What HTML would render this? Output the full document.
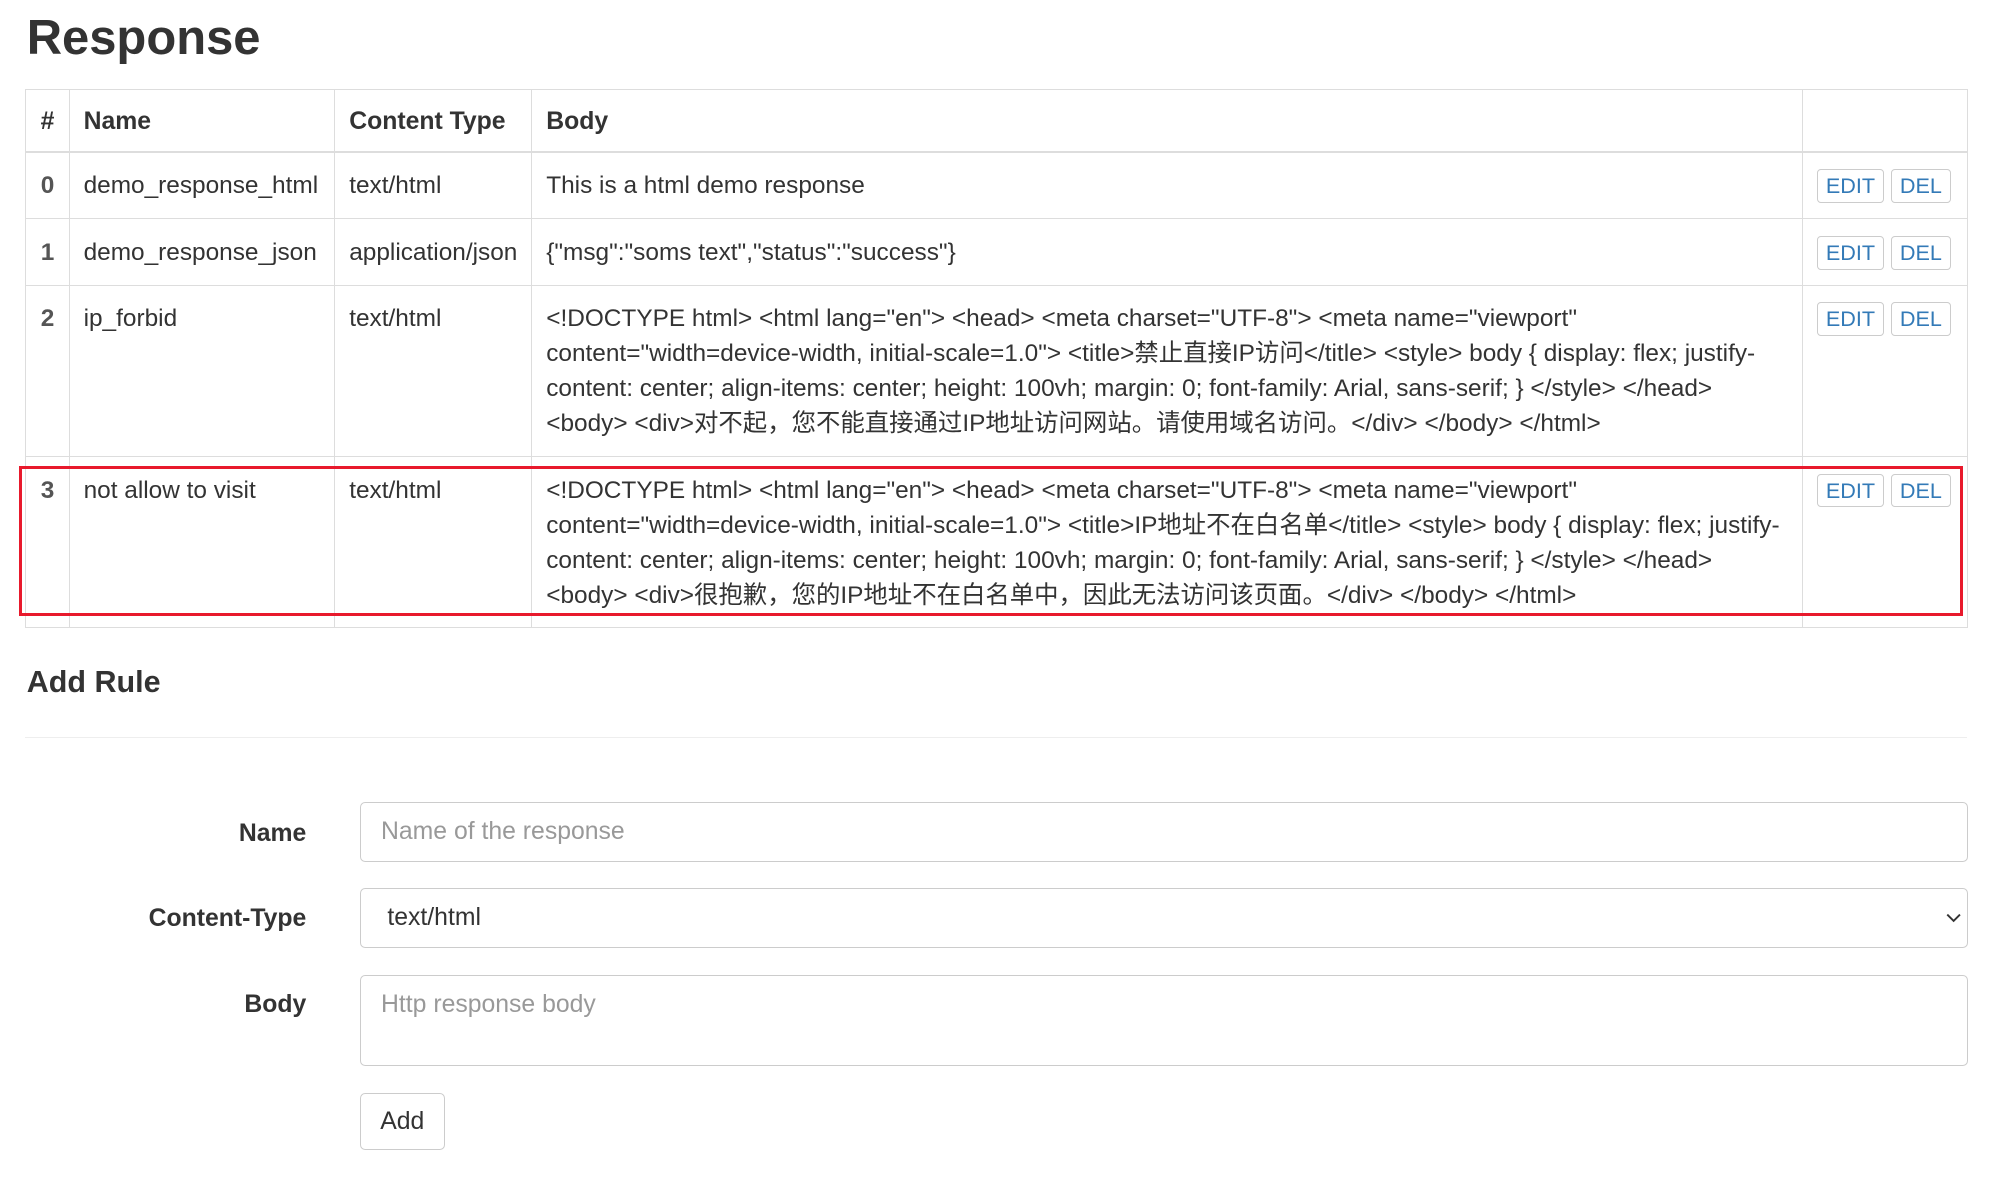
<!DOCTYPE html>
<html><head><meta charset="utf-8"><style>
html,body{margin:0;padding:0;background:#fff;}
body{zoom:1.271;width:1568px;height:926px;overflow:hidden;font-family:"Liberation Sans","Noto Sans CJK SC",sans-serif;color:#333;font-size:19.2px;position:relative;}
h1{position:absolute;left:21px;top:6px;margin:0;font-size:38.5px;font-weight:bold;line-height:48px;}
table{position:absolute;left:20px;top:70px;width:1528px;border-collapse:collapse;table-layout:fixed;}
td,th{border:1px solid #ddd;vertical-align:top;padding:13px 11px 11px 11px;line-height:27.5px;text-align:left;white-space:nowrap;}
th{font-weight:bold;font-size:19.5px;padding:12px 11px 8px 11px;height:28px;border-bottom:2px solid #ddd;}
td.n{font-weight:bold;color:#555;text-align:center;padding-left:0;padding-right:0;}
td.a{padding-left:11px;padding-right:0;}
.b{display:inline-block;border:1px solid #ccc;border-radius:3px;color:#337ab7;font-size:17px;line-height:25px;padding:0 6px;margin-top:0;margin-right:6px;}
.red{position:absolute;left:15px;top:367px;width:1525px;height:113px;border:3px solid #e8192c;}
h3{position:absolute;left:21px;top:521px;margin:0;font-size:24px;line-height:32px;}
hr{position:absolute;left:20px;top:580px;width:1528px;margin:0;border:0;border-top:1px solid #eee;}
.lab{position:absolute;right:1327px;font-weight:bold;font-size:19.5px;}
.in{position:absolute;left:283px;width:1265px;border:1px solid #ccc;border-radius:4px;box-sizing:border-box;padding-left:16px;font-size:19.5px;}
</style></head><body>
<h1>Response</h1>
<table>
<colgroup><col style="width:34px"><col style="width:209px"><col style="width:155px"><col style="width:1000px"><col style="width:130px"></colgroup>
<tr><th style="text-align:center;padding-left:0;padding-right:0">#</th><th>Name</th><th>Content Type</th><th>Body</th><th></th></tr>
<tr><td class="n">0</td><td>demo_response_html</td><td>text/html</td><td>This is a html demo response</td><td class="a"><span class="b">EDIT</span><span class="b">DEL</span></td></tr>
<tr><td class="n">1</td><td>demo_response_json</td><td>application/json</td><td>{"msg":"soms text","status":"success"}</td><td class="a"><span class="b">EDIT</span><span class="b">DEL</span></td></tr>
<tr><td class="n">2</td><td>ip_forbid</td><td>text/html</td><td>&lt;!DOCTYPE html&gt; &lt;html lang="en"&gt; &lt;head&gt; &lt;meta charset="UTF-8"&gt; &lt;meta name="viewport"<br>content="width=device-width, initial-scale=1.0"&gt; &lt;title&gt;禁止直接IP访问&lt;/title&gt; &lt;style&gt; body { display: flex; justify-<br>content: center; align-items: center; height: 100vh; margin: 0; font-family: Arial, sans-serif; } &lt;/style&gt; &lt;/head&gt;<br>&lt;body&gt; &lt;div&gt;对不起，您不能直接通过IP地址访问网站。请使用域名访问。&lt;/div&gt; &lt;/body&gt; &lt;/html&gt;</td><td class="a"><span class="b">EDIT</span><span class="b">DEL</span></td></tr>
<tr><td class="n">3</td><td>not allow to visit</td><td>text/html</td><td>&lt;!DOCTYPE html&gt; &lt;html lang="en"&gt; &lt;head&gt; &lt;meta charset="UTF-8"&gt; &lt;meta name="viewport"<br>content="width=device-width, initial-scale=1.0"&gt; &lt;title&gt;IP地址不在白名单&lt;/title&gt; &lt;style&gt; body { display: flex; justify-<br>content: center; align-items: center; height: 100vh; margin: 0; font-family: Arial, sans-serif; } &lt;/style&gt; &lt;/head&gt;<br>&lt;body&gt; &lt;div&gt;很抱歉，您的IP地址不在白名单中，因此无法访问该页面。&lt;/div&gt; &lt;/body&gt; &lt;/html&gt;</td><td class="a"><span class="b">EDIT</span><span class="b">DEL</span></td></tr>
</table>
<div class="red"></div>
<h3>Add Rule</h3>
<hr>
<div class="lab" style="top:645px">Name</div>
<div class="in" style="top:631px;height:47px;line-height:46px;color:#999">Name of the response</div>
<div class="lab" style="top:712px">Content-Type</div>
<div class="in" style="top:699px;height:47px;line-height:46px;padding-left:21px">text/html<svg style="position:absolute;right:4px;top:18px" width="12" height="10" viewBox="0 0 12 10"><path d="M1 2 L6 7 L11 2" fill="none" stroke="#333" stroke-width="1.5"/></svg></div>
<div class="lab" style="top:780px">Body</div>
<div class="in" style="top:767px;height:72px;line-height:45px;color:#999">Http response body</div>
<div style="position:absolute;left:283px;top:860px;width:67px;height:45px;border:1px solid #ccc;border-radius:4px;box-sizing:border-box;text-align:center;line-height:44px;font-size:19.5px">Add</div>
</body></html>
